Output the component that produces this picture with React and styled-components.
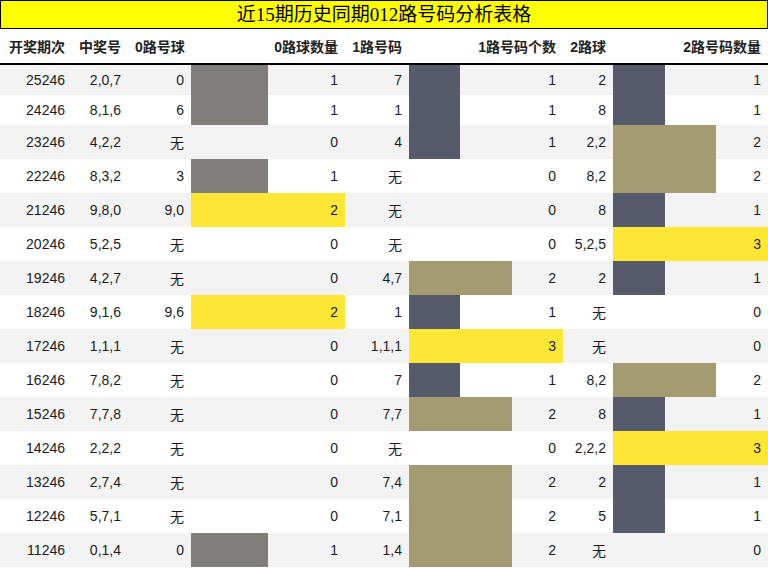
import React from "react";
import styled, { createGlobalStyle } from "styled-components";

const Global = createGlobalStyle`
  html, body { margin: 0; padding: 0; background: #ffffff; }
  body { font-family: "Liberation Sans", "Noto Sans CJK SC", sans-serif; color: #1b1b1b; }
`;

const Page = styled.div`
  width: 768px;
`;

const Title = styled.div`
  box-sizing: border-box;
  height: 29px;
  border: 1px solid #000;
  background: #ffff00;
  font-family: "Liberation Serif", "Noto Sans CJK SC", serif;
  font-size: 19px;
  line-height: 27px;
  text-align: center;
  color: #000;
`;

const Table = styled.table`
  width: 768px;
  border-collapse: collapse;
  table-layout: fixed;
  font-size: 14px;
`;

const HeadCell = styled.th`
  padding: 7px 7px;
  text-align: right;
  font-weight: bold;
  white-space: nowrap;
  color: #222;
  border-bottom: 2px solid #000;
`;

const Row = styled.tr`
  background: ${(p) => (p.$alt ? "#f3f3f3" : "#ffffff")};
`;

const Cell = styled.td`
  padding: 7px 7px;
  text-align: right;
  white-space: nowrap;
`;

const BarCell = styled(Cell)`
  background-image: ${(p) =>
    p.$fill > 0
      ? `linear-gradient(to right, ${p.$color} 0, ${p.$color} ${p.$fill}%, transparent ${p.$fill}%)`
      : "none"};
  background-repeat: no-repeat;
`;

const GRAY = "#7f7e79";
const SLATE = "#565b6b";
const KHAKI = "#a59b71";
const YELLOW = "#fde734";

const zeroColor = (v) => (v === 2 ? YELLOW : GRAY);
const triColor = (v) => (v === 3 ? YELLOW : v === 2 ? KHAKI : SLATE);

const rows = [
  ["25246", "2,0,7", "0", 1, "7", 1, "2", 1],
  ["24246", "8,1,6", "6", 1, "1", 1, "8", 1],
  ["23246", "4,2,2", "无", 0, "4", 1, "2,2", 2],
  ["22246", "8,3,2", "3", 1, "无", 0, "8,2", 2],
  ["21246", "9,8,0", "9,0", 2, "无", 0, "8", 1],
  ["20246", "5,2,5", "无", 0, "无", 0, "5,2,5", 3],
  ["19246", "4,2,7", "无", 0, "4,7", 2, "2", 1],
  ["18246", "9,1,6", "9,6", 2, "1", 1, "无", 0],
  ["17246", "1,1,1", "无", 0, "1,1,1", 3, "无", 0],
  ["16246", "7,8,2", "无", 0, "7", 1, "8,2", 2],
  ["15246", "7,7,8", "无", 0, "7,7", 2, "8", 1],
  ["14246", "2,2,2", "无", 0, "无", 0, "2,2,2", 3],
  ["13246", "2,7,4", "无", 0, "7,4", 2, "2", 1],
  ["12246", "5,7,1", "无", 0, "7,1", 2, "5", 1],
  ["11246", "0,1,4", "0", 1, "1,4", 2, "无", 0],
];

const widths = [72, 56, 63, 154, 64, 154, 50, 155];
const heads = ["开奖期次", "中奖号", "0路号球", "0路球数量", "1路号码", "1路号码个数", "2路球", "2路号码数量"];

export default function App() {
  return (
    <Page>
      <Global />
      <Title>近15期历史同期012路号码分析表格</Title>
      <Table>
        <colgroup>
          {widths.map((w, i) => (
            <col key={i} style={{ width: w }} />
          ))}
        </colgroup>
        <thead>
          <tr>
            {heads.map((h) => (
              <HeadCell key={h}>{h}</HeadCell>
            ))}
          </tr>
        </thead>
        <tbody>
          {rows.map((r, i) => (
            <Row key={r[0]} $alt={i % 2 === 0}>
              <Cell>{r[0]}</Cell>
              <Cell>{r[1]}</Cell>
              <Cell>{r[2]}</Cell>
              <BarCell $fill={(r[3] / 2) * 100} $color={zeroColor(r[3])}>{r[3]}</BarCell>
              <Cell>{r[4]}</Cell>
              <BarCell $fill={(r[5] / 3) * 100} $color={triColor(r[5])}>{r[5]}</BarCell>
              <Cell>{r[6]}</Cell>
              <BarCell $fill={(r[7] / 3) * 100} $color={triColor(r[7])}>{r[7]}</BarCell>
            </Row>
          ))}
        </tbody>
      </Table>
    </Page>
  );
}
